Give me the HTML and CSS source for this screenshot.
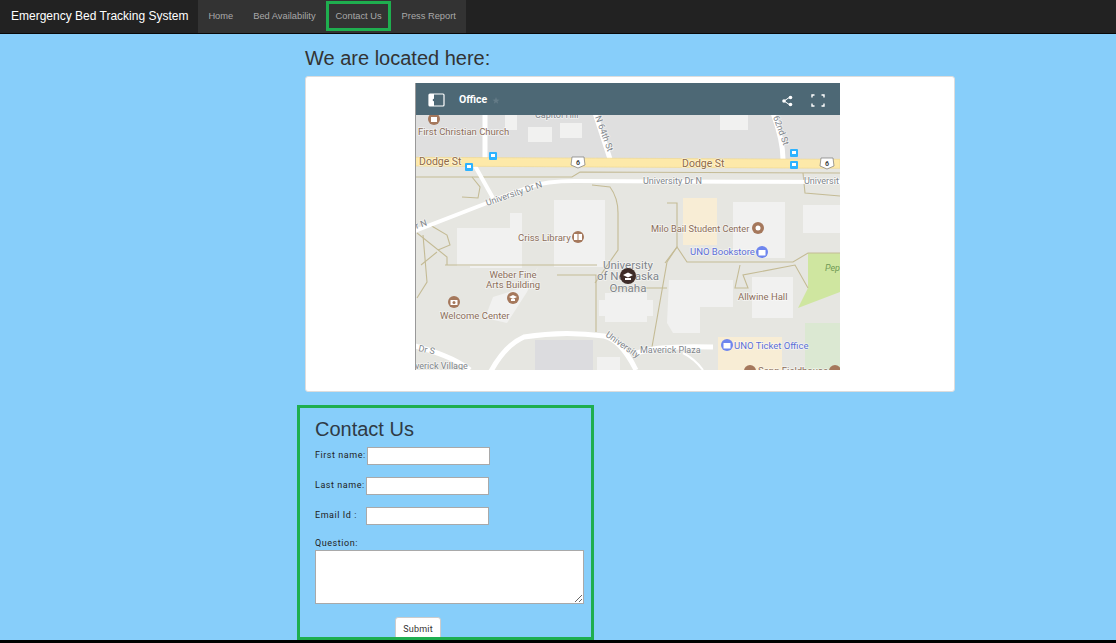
FILE: index.html
```html
<!DOCTYPE html>
<html lang="en">
<head>
    <meta charset="UTF-8">
    <meta name="viewport" content="width=device-width, initial-scale=1.0">
    <title>Contact Us</title>
    <link rel="stylesheet" href="styles.css">
</head>
<body>

    <nav class="navbar">
        <a class="brand" href="#">Emergency Bed Tracking System</a>
        <ul class="nav-links">
            <li><a href="#">Home</a></li>
            <li><a href="#">Bed Availability</a></li>
            <li class="marked"><a href="#">Contact Us</a></li>
            <li><a href="#">Press Report</a></li>
        </ul>
    </nav>

    <main class="content">
        <h2 class="map-title">We are located here:</h2>
        <div class="map-panel">
            <svg class="map" viewBox="0 0 425 287" width="425" height="287" role="img" aria-label="Map of University of Nebraska Omaha">
                <rect width="425" height="287" fill="#e6e6e1"/>
                <rect y="30" width="425" height="46" fill="#dfdfdf"/>

                <!-- buildings -->
                <g fill="#f1f1f0">
                    <rect x="113" y="44" width="24" height="15"/>
                    <rect x="145" y="40" width="22" height="15"/>
                    <rect x="305" y="32" width="28" height="15"/>
                    <rect x="90" y="32" width="12" height="15"/>
                    <path d="M42 145h53v-15h12v55H55v-2H42z"/>
                    <rect x="139" y="117" width="51" height="67"/>
                    <path d="M184 217h6v-7h42v7h6v16h-6v6h-42v-6h-6z"/>
                    <path d="M318 119h52v56h-25v-8h-27z"/>
                    <path d="M254 197h64v27h-33v26h-27l-6-10z"/>
                    <rect x="337" y="194" width="41" height="41"/>
                    <rect x="388" y="122" width="37" height="28"/>
                    <path d="M70 235l8-21 32-10 13-20-11 25-20 31z"/>
                    <rect x="182" y="274" width="23" height="13"/>
                </g>
                <rect x="120" y="257" width="58" height="30" fill="#dcdcdf"/>
                <rect x="268" y="115" width="34" height="47" fill="#f8edd5"/>
                <rect x="303" y="254" width="64" height="33" fill="#f8edd5"/>
                <path d="M393 170h32v39l-42 16 10-20z" fill="#cfe6a0"/>
                <rect x="390" y="240" width="35" height="47" fill="#dbe8d2"/>

                <!-- paths -->
                <g fill="none" stroke="#c4bb95" stroke-width="1.1">
                    <path d="M0 94h157l8-5 260 1"/>
                    <path d="M57 94l8 10-2 11-16-1"/>
                    <path d="M388 90l2 20 35 3"/>
                    <path d="M177 102l18 2c6 8 8 18 8 26v37l-23 33"/>
                    <path d="M30 182h152M142 192h39v57"/>
                    <path d="M2 150l30 24v8M6 182l16-13"/>
                    <path d="M2 215l10-16-4-47M23 167l12-5-3-10-17-10"/>
                    <path d="M237 264l15-85 10-15 10 15h106l15-9h32"/>
                    <path d="M250 180l12-16v-44h-10"/>
                    <path d="M325 182l-5 23h13l-5-13 52-10 13 23"/>
                    <path d="M195 205h57"/>
                </g>

                <!-- roads -->
                <g fill="none" stroke="#fff">
                    <path d="M0 148l72-28 42-16c14-5 30-6 46-6 60 0 180 1 265 1" stroke-width="4"/>
                    <path d="M75 290c8-15 20-30 34-36 30-5 58-4 80-1 14 3 24 18 32 34" stroke-width="5"/>
                    <path d="M222 270c14-6 40-7 76-6" stroke-width="5"/>
                    <path d="M0 263c20 6 40 12 55 24" stroke-width="5"/>
                    <path d="M288 287c-6-8-12-13-20-17" stroke-width="2"/>
                    <path d="M60 83l18 32" stroke-width="4"/>
                    <path d="M70 30v46" stroke-width="5"/>
                    <path d="M180 30l15 46" stroke-width="5"/>
                    <path d="M358 30c5 14 10 30 10 46" stroke-width="5"/>
                </g>
                <path d="M0 74.300l425 2v9L0 83z" fill="#fde9a9" stroke="#f0d68c" stroke-width=".6"/>

                <!-- road shields and transit -->
                <g fill="#fff" stroke="#777" stroke-width=".7">
                    <path d="M157 74h12l1 8-7 3-7-3z"/>
                    <path d="M406 75h12l1 8-7 3-7-3z"/>
                </g>
                <g class="shield-num">
                    <text x="163" y="82">6</text>
                    <text x="412" y="83">6</text>
                </g>
                <g fill="#2db3ff">
                    <rect x="74" y="69" width="8" height="8" rx="1"/>
                    <rect x="50" y="80" width="8" height="8" rx="1"/>
                    <rect x="375" y="66" width="8" height="8" rx="1"/>
                    <rect x="375" y="78" width="8" height="8" rx="1"/>
                </g>
                <g fill="#fff">
                    <rect x="76" y="71" width="4" height="3"/>
                    <rect x="52" y="82" width="4" height="3"/>
                    <rect x="377" y="68" width="4" height="3"/>
                    <rect x="377" y="80" width="4" height="3"/>
                </g>

                <!-- labels -->
                <g class="label-brown">
                    <text x="3" y="52">First Christian Church</text>
                    <text x="103" y="158">Criss Library</text>
                    <text x="98" y="195" text-anchor="middle">Weber Fine</text>
                    <text x="98" y="205" text-anchor="middle">Arts Building</text>
                    <text x="25" y="236">Welcome Center</text>
                    <text class="narrow" x="236" y="149">Milo Bail Student Center</text>
                    <text x="323" y="217">Allwine Hall</text>
                    <text x="343" y="291">Sapp Fieldhouse</text>
                </g>
                <g class="label-road">
                    <text x="4" y="82">Dodge St</text>
                    <text x="267" y="84">Dodge St</text>
                </g>
                <g class="label-gray">
                    <text x="228" y="101">University Dr N</text>
                    <text x="389" y="101">Universit</text>
                    <text transform="translate(72 123) rotate(-19)">University Dr N</text>
                    <text transform="translate(180 34) rotate(70)">N 64th St</text>
                    <text transform="translate(358 34) rotate(70)">62nd St</text>
                    <text x="120" y="35">Capitol Hill</text>
                    <text transform="translate(-4 148) rotate(-19)">Dr N</text>
                    <text x="225" y="270">Maverick Plaza</text>
                    <text transform="translate(3 268) rotate(12)">Dr S</text>
                    <text x="0" y="286">verick Village</text>
                    <text transform="translate(190 253) rotate(35)">University</text>
                </g>
                <g class="label-blue">
                    <text x="275" y="172">UNO Bookstore</text>
                    <text x="319" y="266">UNO Ticket Office</text>
                </g>
                <text class="label-park" x="410" y="188">Pep</text>
                <g class="label-campus">
                    <text x="213" y="186">University</text>
                    <text x="213" y="197">of Nebraska</text>
                    <text x="213" y="209">Omaha</text>
                </g>

                <!-- pois -->
                <g fill="#a5785c">
                    <circle cx="19" cy="36" r="6"/>
                    <circle cx="343" cy="145" r="6"/>
                    <circle cx="163" cy="154" r="6"/>
                    <circle cx="98" cy="215" r="6"/>
                    <circle cx="39" cy="219" r="6"/>
                    <circle cx="335" cy="288" r="6"/>
                    <circle cx="420" cy="288" r="6"/>
                </g>
                <g fill="#fff">
                    <rect x="16" y="34" width="6" height="5"/>
                    <circle cx="343" cy="145" r="2.500"/>
                    <path d="M159 151h3.500v6H159zM163.500 151H167v6h-3.500z"/>
                    <path d="M94 214l4-2 4 2-4 2zM96 216h4v2h-4z"/>
                    <path d="M35.500 217h7v5h-7z"/>
                </g>
                <circle cx="39" cy="219.500" r="1.500" fill="#a5785c"/>
                <g fill="#6f86ee">
                    <circle cx="347" cy="169" r="6"/>
                    <circle cx="312" cy="262" r="6"/>
                </g>
                <path d="M343.500 167h7v5.500h-7zM308.500 260h7v5.500h-7z" fill="#fff"/>
                <circle cx="213" cy="193" r="8" fill="#3e2c28"/>
                <path d="M208 192l5-2.500 5 2.500-5 2.500zM210 195h6v2h-6z" fill="#fff"/>

                <!-- map header -->
                <rect width="425" height="32" fill="#4d6875"/>
                <g fill="none" stroke="#fff" stroke-width="1.200">
                    <path d="M19 11h-4a1 1 0 0 0-1 1v10a1 1 0 0 0 1 1h13a1 1 0 0 0 1-1V12a1 1 0 0 0-1-1z"/>
                    <path d="M397 14.500V12h2.500M406.500 12h2.500v2.500M409 20.500V23h-2.500M399.500 23H397v-2.500" stroke-width="1.400"/>
                    <path d="M375 14l-6 4 6 4" stroke-width="1"/>
                </g>
                <rect x="14" y="11" width="5" height="12" fill="#fff"/>
                <circle cx="19" cy="17" r="1.300" fill="#4d6875"/>
                <text class="map-head" x="44" y="20">Office</text>
                <path d="M81 14l1 2.500 2.500.2-2 1.500.7 2.500-2.200-1.400-2.200 1.400.7-2.500-2-1.500 2.500-.2z" fill="#647b87"/>
                <g fill="#fff">
                    <circle cx="375.500" cy="14.500" r="1.800"/>
                    <circle cx="369" cy="18" r="1.800"/>
                    <circle cx="375.500" cy="21.500" r="1.800"/>
                </g>
                <rect width="1" height="287" fill="#999"/>
            </svg>
        </div>

        <form class="contact-box">
            <h2 class="contact-title">Contact Us</h2>
            <div class="field first"><label for="firstName">First name:</label><input type="text" id="firstName"></div>
            <div class="field"><label for="lastName">Last name:</label><input type="text" id="lastName"></div>
            <div class="field"><label for="emailId">Email Id :</label><input type="text" id="emailId"></div>
            <label class="question-label" for="question">Question:</label>
            <textarea id="question"></textarea>
            <button type="button" class="submit-btn">Submit</button>
        </form>
    </main>

    <div class="bottom-bar"></div>

</body>
</html>
```

FILE: styles.css
```css
html, body {
    height: 100%;
}

body {
    margin: 0;
    display: flex;
    flex-direction: column;
    overflow: hidden;
    background-color: #87cefa;
    font-family: 'Liberation Sans', Arial, sans-serif;
    color: #333;
}

.navbar {
    display: flex;
    flex: none;
    height: 34px;
    box-sizing: border-box;
    background-color: #222;
    border-bottom: 1px solid #080808;
    padding-left: 1px;
}

.brand {
    padding: 0 10px;
    line-height: 32px;
    font-size: 12px;
    color: #fff;
    text-decoration: none;
}

.nav-links {
    display: flex;
    list-style: none;
    margin: 0;
    padding: 0;
    background-color: #333;
}

.nav-links li {
    position: relative;
}

.nav-links a {
    display: block;
    padding: 0 10px;
    line-height: 32px;
    font-size: 9.3px;
    color: #a9a9a9;
    text-decoration: none;
}

.nav-links .marked::after {
    content: "";
    position: absolute;
    left: 0;
    top: 1px;
    width: 65px;
    height: 30px;
    box-sizing: border-box;
    border: 3px solid #1fae4f;
}

.content {
    flex: 1;
    display: flex;
    flex-direction: column;
    align-items: flex-start;
    min-height: 0;
    padding-left: 297px;
}

.map-title {
    margin: 12px 0 5px 8px;
    font-size: 20px;
    font-weight: normal;
    line-height: 25px;
}

.map-panel {
    display: flex;
    justify-content: center;
    box-sizing: border-box;
    width: 650px;
    height: 316px;
    margin-left: 8px;
    padding-top: 6px;
    background-color: #fff;
    border: 1px solid #ddd;
    border-radius: 3px;
}

.map {
    display: block;
    margin-right: 5px;
}

.map text {
    font-family: Roboto, sans-serif;
}

.label-brown,
.label-road,
.label-gray,
.label-blue,
.label-campus {
    paint-order: stroke;
    stroke: rgba(255, 255, 255, .55);
    stroke-width: 1.5px;
}

.label-brown {
    font-size: 9.5px;
    fill: #8c6e5a;
}

.label-brown .narrow {
    font-size: 9.2px;
}

.label-road {
    font-size: 10.5px;
    fill: #8f6a47;
}

.label-gray {
    font-size: 9px;
    fill: #80858a;
}

.label-blue {
    font-size: 9.5px;
    fill: #5c6fd8;
}

.label-park {
    font-size: 9px;
    font-style: italic;
    fill: #6f9a55;
}

.label-campus {
    font-size: 11.5px;
    text-anchor: middle;
    fill: #7f858c;
}

.shield-num {
    font-size: 7px;
    font-weight: bold;
    text-anchor: middle;
    fill: #444;
}

.map-head {
    font-size: 10.500px;
    font-weight: bold;
    fill: #fff;
}

.contact-box {
    position: relative;
    box-sizing: border-box;
    width: 297px;
    height: 235px;
    margin-top: 13px;
    padding: 0 7px 0 15px;
    border: 3px solid #1fae4f;
    overflow: hidden;
}

.contact-title {
    margin: 9px 0 6px;
    font-size: 20px;
    font-weight: normal;
    line-height: 24px;
    color: #2f3a45;
}

.field {
    display: flex;
    align-items: center;
    height: 18px;
    margin-bottom: 12px;
}

.field label,
.question-label {
    font-family: Roboto, sans-serif;
    font-size: 9px;
    letter-spacing: .55px;
    color: #222;
}

.field label {
    width: 51px;
    padding-bottom: 2px;
}

.field.first label {
    width: 52px;
}

.field input {
    box-sizing: border-box;
    width: 123px;
    height: 18px;
    padding: 0 3px;
    background-color: #fff;
    border: 1px solid #a9a9a9;
}

.question-label {
    display: block;
    margin: 12px 0 1px;
    line-height: 12px;
}

textarea {
    display: block;
    box-sizing: border-box;
    width: 269px;
    height: 54px;
    margin: 0;
    background-color: #fff;
    border: 1px solid #a9a9a9;
}

.submit-btn {
    display: block;
    box-sizing: border-box;
    width: 46px;
    height: 24px;
    margin: 13px 0 0 80px;
    padding: 0;
    background-color: #fff;
    border: 1px solid #ccc;
    border-radius: 3px;
    font-family: Roboto, sans-serif;
    font-size: 9px;
    letter-spacing: .2px;
    color: #333;
}

.bottom-bar {
    flex: none;
    height: 3px;
    background-color: #000;
}
```
